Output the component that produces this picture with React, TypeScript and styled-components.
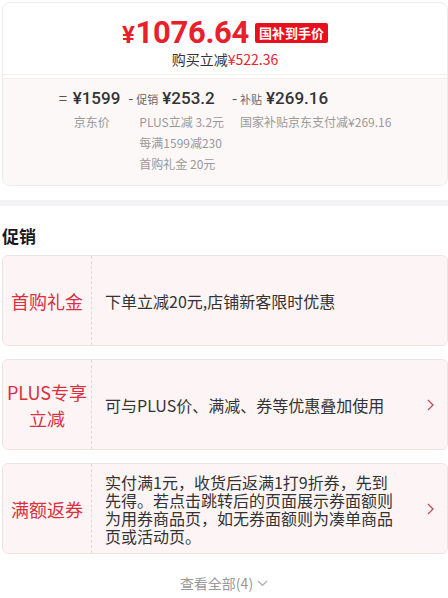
import styled, { createGlobalStyle } from "styled-components";

const GlobalStyle = createGlobalStyle`
  html, body {
    margin: 0;
    padding: 0;
    background: #fff;
    overflow: hidden;
  }
  body {
    font-family: "Noto Sans CJK SC", "Noto Sans", sans-serif;
    color: #333;
  }
`;

const Page = styled.div`
  width: 448px;
  padding-top: 2px;
`;

const PriceCard = styled.div`
  margin-left: 2px;
  border: 1px solid #ececec;
  border-radius: 8px;
  overflow: hidden;
`;

const PriceHead = styled.div`
  display: flex;
  flex-direction: column;
  align-items: center;
  padding: 12px 0 5px;
  border-bottom: 1px solid #f1eded;
`;

const PriceRow = styled.div`
  display: flex;
  align-items: center;
  gap: 6px;
  height: 34px;
`;

const BigPrice = styled.span`
  font-family: Roboto, "Liberation Sans", sans-serif;
  font-weight: 700;
  font-size: 31px;
  color: #e8202c;
  letter-spacing: -0.3px;
  small {
    font-size: 24px;
    margin-right: 1px;
  }
`;

const Badge = styled.span`
  background: #e8101e;
  color: #fff;
  font-weight: 700;
  font-size: 13px;
  line-height: 20px;
  padding: 0 4px;
  border-radius: 2px;
  margin-top: 2px;
`;

const SubLine = styled.div`
  font-size: 14px;
  line-height: 20px;
  color: #333;
`;

const Red = styled.span`
  color: #e8202c;
`;

const Breakdown = styled.div`
  display: flex;
  justify-content: center;
  gap: 8px;
  padding: 6px 0 11px;
  background: #fdf8f8;
  border-top: 1px solid #f6f0f0;
  margin-top: 3px;
`;

const Col = styled.div`
  display: flex;
  align-items: flex-start;
`;

const Op = styled.span`
  font-size: 15px;
  line-height: 26px;
  color: #555;
  width: ${(p: { $w: number }) => p.$w}px;
`;

const ColBody = styled.div`
  display: flex;
  flex-direction: column;
`;

const Value = styled.div`
  display: flex;
  align-items: baseline;
  gap: 4px;
  height: 26px;
  line-height: 26px;
`;

const Tag = styled.span`
  font-size: 11px;
  color: #666;
`;

const Amount = styled.span`
  font-family: Roboto, "Liberation Sans", sans-serif;
  font-size: 17px;
  font-weight: 500;
  color: #333;
`;

const Note = styled.div`
  font-size: 12px;
  line-height: 21px;
  color: #999;
  padding-left: ${(p: { $pad?: number }) => p.$pad ?? 0}px;
`;

const GrayBand = styled.div`
  height: 6px;
  background: #f4f4f7;
  margin-top: 14px;
`;

const SectionTitle = styled.div`
  font-size: 17px;
  font-weight: 700;
  color: #1a1a1a;
  line-height: 24px;
  padding: 18px 0 0 2px;
`;

const PromoList = styled.div`
  display: flex;
  flex-direction: column;
  gap: 13px;
  margin: 7px 0 0 2px;
`;

const PromoCard = styled.div`
  display: flex;
  align-items: stretch;
  min-height: 89px;
  background: #fdf5f5;
  border: 1px solid #f1e3e3;
  border-radius: 6px;
`;

const PromoLabel = styled.div`
  width: 88px;
  flex-shrink: 0;
  display: flex;
  align-items: center;
  justify-content: center;
  text-align: center;
  font-size: 18px;
  line-height: 26px;
  color: #d9303e;
  border-right: 1px dashed #ead6d6;
`;

const PromoText = styled.div`
  width: 292px;
  display: flex;
  align-items: center;
  padding-left: 13px;
  font-size: 16px;
  line-height: 18px;
  color: #333;
`;

const Arrow = styled.div`
  flex: 1;
  display: flex;
  align-items: center;
  justify-content: flex-end;
  padding-right: 13px;
`;

const MoreRow = styled.div`
  display: flex;
  justify-content: center;
  align-items: center;
  gap: 4px;
  margin-top: 19px;
  font-size: 14px;
  line-height: 20px;
  color: #999;
`;

const Chevron = () => (
  <svg width="7" height="12" viewBox="0 0 7 12">
    <path d="M1 1l5 5-5 5" fill="none" stroke="#c2485a" strokeWidth="1.3" />
  </svg>
);

const Down = () => (
  <svg width="11" height="7" viewBox="0 0 11 7">
    <path d="M1 1l4.5 4.5L10 1" fill="none" stroke="#aaa" strokeWidth="1.2" />
  </svg>
);

const promos = [
  { label: "首购礼金", text: "下单立减20元,店铺新客限时优惠", arrow: false },
  { label: "PLUS专享\n立减", text: "可与PLUS价、满减、券等优惠叠加使用", arrow: true },
  {
    label: "满额返券",
    text: "实付满1元，收货后返满1打9折券，先到先得。若点击跳转后的页面展示券面额则为用券商品页，如无券面额则为凑单商品页或活动页。",
    arrow: true,
  },
];

export default function App() {
  return (
    <Page>
      <GlobalStyle />
      <PriceCard>
        <PriceHead>
          <PriceRow>
            <BigPrice>
              <small>¥</small>1076.64
            </BigPrice>
            <Badge>国补到手价</Badge>
          </PriceRow>
          <SubLine>
            购买立减<Red>¥522.36</Red>
          </SubLine>
        </PriceHead>
        <Breakdown>
          <Col>
            <Op $w={14}>=</Op>
            <ColBody>
              <Value>
                <Amount>¥1599</Amount>
              </Value>
              <Note $pad={1}>京东价</Note>
            </ColBody>
          </Col>
          <Col>
            <Op $w={8}>-</Op>
            <ColBody>
              <Value>
                <Tag>促销</Tag>
                <Amount>¥253.2</Amount>
              </Value>
              <Note $pad={3}>PLUS立减 3.2元</Note>
              <Note $pad={3}>每满1599减230</Note>
              <Note $pad={3}>首购礼金 20元</Note>
            </ColBody>
          </Col>
          <Col>
            <Op $w={8}>-</Op>
            <ColBody>
              <Value>
                <Tag>补贴</Tag>
                <Amount>¥269.16</Amount>
              </Value>
              <Note>国家补贴京东支付减¥269.16</Note>
            </ColBody>
          </Col>
        </Breakdown>
      </PriceCard>
      <GrayBand />
      <SectionTitle>促销</SectionTitle>
      <PromoList>
        {promos.map((p) => (
          <PromoCard key={p.label}>
            <PromoLabel>
              <span style={{ whiteSpace: "pre-line" }}>{p.label}</span>
            </PromoLabel>
            <PromoText>{p.text}</PromoText>
            <Arrow>{p.arrow && <Chevron />}</Arrow>
          </PromoCard>
        ))}
      </PromoList>
      <MoreRow>
        查看全部(4)
        <Down />
      </MoreRow>
    </Page>
  );
}
